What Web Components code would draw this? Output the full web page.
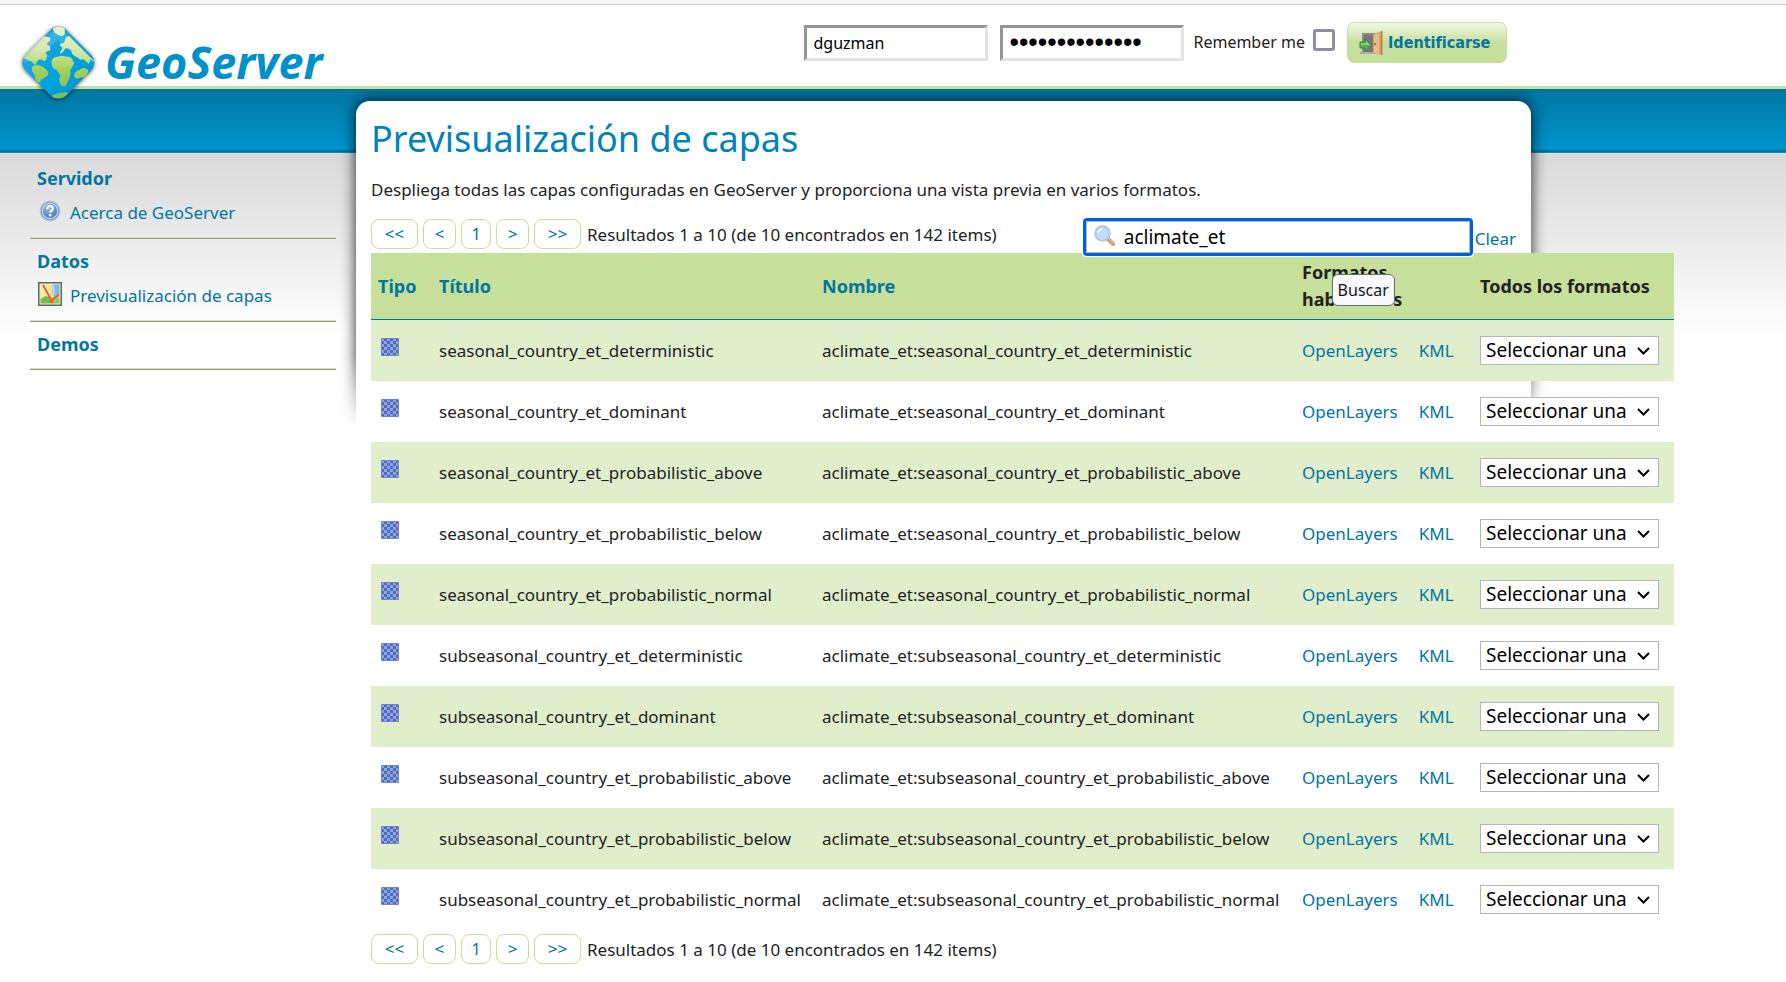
<!DOCTYPE html>
<html lang="es">
<head>
<meta charset="utf-8">
<title>GeoServer: Previsualización de capas</title>
<style>
  body {
    margin: 0;
    background: #fff;
    color: #222;
    font: 17px/27px "Noto Sans", Tahoma, sans-serif;
    --link: #0076a1;
    --brand: #0083ba;
    --green: #c6df9a;
    --green-light: #e1eecc;
  }
</style>
</head>
<body>
<gs-page>
  <gs-header slot="header"></gs-header>
  <gs-nav slot="nav">
    <gs-nav-group heading="Servidor">
      <gs-nav-link icon="help">Acerca de GeoServer</gs-nav-link>
    </gs-nav-group>
    <gs-nav-group heading="Datos">
      <gs-nav-link icon="map">Previsualización de capas</gs-nav-link>
    </gs-nav-group>
    <gs-nav-group heading="Demos"></gs-nav-group>
  </gs-nav>
  <gs-panel heading="Previsualización de capas">
    <span slot="description">Despliega todas las capas configuradas en GeoServer y proporciona una vista previa en varios formatos.</span>
    <gs-pager slot="tools">Resultados 1 a 10 (de 10 encontrados en 142 items)</gs-pager>
    <gs-search slot="tools"></gs-search>
    <gs-layer-table></gs-layer-table>
    <gs-pager>Resultados 1 a 10 (de 10 encontrados en 142 items)</gs-pager>
  </gs-panel>
</gs-page>

<script>
const define = (name, markup, setup) => customElements.define(name, class extends HTMLElement {
  constructor() {
    super();
    const template = document.createElement('template');
    template.innerHTML = markup;
    this.attachShadow({ mode: 'open' }).append(template.content.cloneNode(true));
  }
  connectedCallback() {
    if (setup) setup(this, this.shadowRoot);
  }
});

const icons = {
  help: `<svg viewBox="0 0 22 22" width="22" height="22">
    <defs><radialGradient id="b" cx=".4" cy=".3" r=".8"><stop offset="0" stop-color="#9dbbe2"/><stop offset="1" stop-color="#4371b5"/></radialGradient></defs>
    <circle cx="11" cy="11" r="10.5" fill="#b6cbe8"/><circle cx="11" cy="11" r="9.3" fill="#6f97cf"/>
    <circle cx="11" cy="11" r="8.2" fill="#d3e1f4"/><circle cx="11" cy="11" r="7.2" fill="url(#b)"/>
    <path d="M8.2 9q0-3 2.9-3 2.8 0 2.8 2.5 0 1.3-1.4 2.2-1.2.7-1.2 2" fill="none" stroke="#fff" stroke-width="2"/>
    <circle cx="11.2" cy="15.2" r="1.3" fill="#fff"/></svg>`,
  map: `<svg viewBox="0 0 24 24" width="24" height="24">
    <path fill="#5d6c5a" d="M0 0h24v24H0z"/><path fill="#e9efe6" d="M1.5 1.5h21v21h-21z"/>
    <path fill="#f3e486" d="M2.5 2.5h19v19h-19z"/><path fill="#f8eeb0" d="M2.5 2.5H8l3 8-8 5z"/>
    <path fill="#82b5ec" d="M14 2.5h7.500v10l-5.500 2-2-4z"/><path fill="#b8d7f4" d="M14 2.500h2l1 10-2 1z"/>
    <path fill="#76b956" d="M2.500 17l5-3 4 1 3 6.500h-12z"/><path fill="#8cc66d" d="M14 17l7.500-2v6.500H14z"/>
    <path d="M5 3l5 9 5 9M21 13l-5 3-4 4" fill="none" stroke="#ea4f36" stroke-width="1.700"/></svg>`,
  raster: `<svg viewBox="0 0 18 18" width="18" height="18">
    <defs><pattern id="c" width="6" height="6" patternUnits="userSpaceOnUse"><path fill="#5269bd" d="M0 0h6v6H0z"/><path fill="#8aa8e0" d="M0 0h3v3H0zM3 3h3v3H3z"/></pattern></defs>
    <rect width="18" height="18" rx="1" fill="#7583c8"/><path fill="url(#c)" d="M1 1h16v16H1z"/></svg>`
};

/* Page frame: header, blue band, side menu and content */
define('gs-page', `
<style>
  :host { display: block; }
  .body {
    display: flex;
    gap: 20px;
    padding: 0 255px 16px 30px;
    background:
      linear-gradient(#0076a1, #0092cc 58px, #0092cc 61px, #00759f 61px, #00759f 63px, #2ba0cb 64px, transparent 64px) 0 0 / 100% 65px no-repeat,
      linear-gradient(#d9d9d9, #fff) 0 64px / 100% 182px no-repeat;
  }
  nav { flex: 0 0 306px; padding-top: 67px; }
  main { flex: 1; min-width: 0; padding-top: 12px; }
</style>
<slot name="header"></slot>
<div class="body">
  <nav><slot name="nav"></slot></nav>
  <main><slot></slot></main>
</div>`);

define('gs-header', `
<style>
  :host {
    display: block;
    position: relative;
    z-index: 1;
    border-bottom: 3px solid var(--green);
  }
  .chrome { height: 4px; background: #f7f7fa; border-bottom: 1px solid #c9c9ce; }
  header { display: flex; justify-content: space-between; height: 81px; padding: 0 279px 0 15px; }
</style>
<div class="chrome"></div>
<header><gs-logo></gs-logo><gs-login></gs-login></header>`);

define('gs-logo', `
<style>
  :host { display: block; }
  a { display: flex; color: #0091cb; text-decoration: none; padding-top: 15px; }
  svg { flex: none; margin-bottom: -24px; }
  strong { font: italic 700 45px/60px "Noto Sans", sans-serif; margin-top: 12px; }
</style>
<a href="#" aria-label="GeoServer">
  <svg viewBox="0 0 270 270" width="90" height="90">
    <defs>
      <clipPath id="d"><rect x="44" y="42" width="172" height="172" rx="34" transform="rotate(45 130 128)"/></clipPath>
      <linearGradient id="sea" x1="0" y1="0" x2="1" y2="1"><stop offset="0" stop-color="#30a9dd"/><stop offset=".55" stop-color="#00a2df"/><stop offset="1" stop-color="#0086c8"/></linearGradient>
      <linearGradient id="land" gradientUnits="userSpaceOnUse" x1="130" y1="20" x2="130" y2="235"><stop offset="0" stop-color="#e5efd0"/><stop offset=".3" stop-color="#d3e5a8"/><stop offset=".5" stop-color="#b4d873"/><stop offset=".62" stop-color="#9fcf5c"/><stop offset="1" stop-color="#7fbd57"/></linearGradient>
      <filter id="s" x="-20%" y="-20%" width="140%" height="140%"><feGaussianBlur stdDeviation="6"/></filter>
    </defs>
    <rect x="44" y="44" width="172" height="172" rx="34" transform="rotate(45 130 130)" fill="#000" opacity=".65" filter="url(#s)"/>
    <g clip-path="url(#d)">
      <path fill="url(#sea)" d="M0 0h270v270H0z"/>
      <g fill="url(#land)">
        <path d="M20 112L84 48Q96 50 106 54Q108 62 98 68Q92 74 104 78Q108 86 104 92Q94 92 92 100Q98 104 96 112Q94 120 88 124Q80 116 72 118Q64 128 60 136Q48 120 34 118Z"/>
        <path d="M50 142Q62 130 76 138Q86 140 100 156Q100 168 90 172Q78 178 72 190Q56 178 60 166Q50 156 50 142Z"/>
        <path d="M114 24Q130 16 148 24Q152 34 148 44Q138 52 128 44Q114 38 114 24Z"/>
        <path d="M110 122Q114 110 128 110Q142 104 152 110Q164 108 172 116Q172 124 178 130Q172 142 166 150Q168 160 164 172Q158 188 152 198Q140 202 136 192Q130 178 136 168Q132 158 124 150Q108 146 110 122Z"/>
        <path d="M150 62Q152 48 162 48L238 124Q230 122 226 118Q224 130 220 132Q210 120 204 116Q198 122 194 118Q186 110 178 108Q168 100 170 92Q160 82 150 86Q146 96 136 102Q134 92 142 88Q138 76 150 62Z"/>
        <path d="M134 76q2-8 8-6t4 8q-6 6-12-2z"/>
        <path d="M177 168Q178 154 192 150Q206 138 220 150Q218 166 210 176Q198 168 190 176Q182 178 177 168Z"/>
        <path d="M104 230Q130 214 162 218Q154 232 132 238Z"/>
      </g>
      <path d="M130 21L240 126Q220 130 188 112Q150 84 130 60Q100 76 76 116Q50 130 22 124Z" fill="#fff" opacity=".15"/>
    </g>
  </svg>
  <strong>GeoServer</strong>
</a>`);

define('gs-login', `
<style>
  :host { display: block; }
  form { display: flex; align-items: center; gap: 12px; padding-top: 17px; }
  .field {
    box-sizing: border-box;
    width: 184px;
    height: 36px;
    padding: 0 6px;
    border: 3px solid;
    border-color: #949494 #e3e3e3 #e3e3e3 #949494;
    background: #fff;
    color: #000;
    font: 16px/27px "Noto Sans", sans-serif;
  }
  .field[type=password] { font-family: "Liberation Sans", sans-serif; font-size: 27px; }
  label { display: flex; align-items: center; gap: 8px; margin-left: -3px; font-size: 16px; }
  input[type=checkbox] {
    appearance: none;
    box-sizing: border-box;
    width: 22px;
    height: 22px;
    margin: 0 0 6px;
    border: 3px solid #8f8f9d;
    border-radius: 3px;
    background: #fff;
  }
  button {
    display: flex;
    align-items: center;
    gap: 5px;
    width: 160px;
    height: 41px;
    padding: 0 11px;
    border: 1px solid var(--green);
    border-radius: 7px;
    background: linear-gradient(#f3f8e9, var(--green) 50%);
    color: var(--link);
    font: 700 16px/27px "DejaVu Sans Condensed", "Noto Sans", sans-serif;
  }
  svg { flex: none; }
</style>
<form>
  <input class="field" type="text" value="dguzman" aria-label="Usuario">
  <input class="field" type="password" value="clavegeoserver" aria-label="Contraseña">
  <label>Remember me <input type="checkbox"></label>
  <button type="button">
    <svg viewBox="0 0 24 24" width="24" height="24">
      <path fill="#8c8c8c" d="M3 2h13v20H3z"/><path fill="#777" d="M5 4h10v17H5z"/><path fill="#aaa" d="M1 21h15v2H1z"/>
      <path fill="#d9a068" d="M14 3l9-3v24l-9-2z"/><path fill="#e9bb8a" d="M15 4l5-2v21l-5-1z"/><path fill="#c07f42" d="M22 0.500l1.500-.5v24l-1.500-.5z"/>
      <circle cx="16" cy="13" r="1" fill="#8a5927"/>
      <path fill="#5fae55" stroke="#3c8640" d="M1 11h5V7.500l6.500 6.500L6 20.500V17H1z"/><path fill="#8fce82" d="M2 12h5v-2l4 4H2z"/>
    </svg>Identificarse
  </button>
</form>`);

define('gs-nav', `<style>:host { display: block; }</style><slot></slot>`);

define('gs-nav-group', `
<style>
  :host {
    display: flex;
    flex-direction: column;
    gap: 7px;
    padding: 9px 7px 11px;
    border-bottom: 1px solid #98a187;
    box-shadow: inset 0 -1px #d3dfbd;
  }
  h2 { margin: 0; font-size: 18px; line-height: 27px; color: var(--link); }
</style>
<h2></h2><slot></slot>`, (host, root) => {
  root.querySelector('h2').textContent = host.getAttribute('heading');
});

define('gs-nav-link', `
<style>
  :host { display: block; height: 28px; }
  a { display: flex; align-items: center; gap: 8px; color: var(--link); text-decoration: none; }
  i { flex: 0 0 25px; display: grid; justify-content: center; }
  svg { margin-bottom: 3px; }
</style>
<a href="#"><i></i><slot></slot></a>`, (host, root) => {
  root.querySelector('i').innerHTML = icons[host.getAttribute('icon')];
});

/* White sheet whose shadow fades out down the page */
define('gs-panel', `
<style>
  :host { display: block; position: relative; padding: 14px 15px 0; }
  .shade {
    position: absolute;
    inset: -20px -20px auto;
    height: 350px;
    padding: 20px 20px 0;
    box-sizing: border-box;
    overflow: hidden;
    -webkit-mask-image: linear-gradient(#000 78%, transparent 99%);
    mask-image: linear-gradient(#000 78%, transparent 99%);
  }
  .shade div {
    height: 400px;
    border-radius: 14px;
    background: #fff;
    box-shadow: 0 0 15px rgba(0, 0, 0, .85);
  }
  .content { position: relative; }
  h1 { margin: 0; font-size: 36px; line-height: 48px; font-weight: 400; color: var(--brand); }
  p { margin: 13px 0 16px; }
  .tools { display: flex; justify-content: space-between; height: 34px; }
</style>
<div class="shade"><div></div></div>
<div class="content">
  <h1></h1>
  <p><slot name="description"></slot></p>
  <div class="tools"><slot name="tools"></slot></div>
  <slot></slot>
</div>`, (host, root) => {
  root.querySelector('h1').textContent = host.getAttribute('heading');
});

define('gs-pager', `
<style>
  :host { display: flex; align-items: center; gap: 5px; height: 30px; white-space: nowrap; }
  a {
    box-sizing: border-box;
    width: 33px;
    height: 30px;
    border: 1px solid var(--green);
    border-radius: 8px;
    color: var(--link);
    text-align: center;
    text-decoration: none;
    line-height: 28px;
  }
  .end { width: 47px; }
  .page { width: 30px; }
  slot { display: block; margin-left: 1px; }
</style>
<a class="end" href="#">&lt;&lt;</a><a href="#">&lt;</a><a class="page" href="#">1</a><a href="#">&gt;</a><a class="end" href="#">&gt;&gt;</a>
<slot></slot>`);

define('gs-search', `
<style>
  :host { display: flex; align-items: flex-end; gap: 5px; position: relative; z-index: 1; }
  .box {
    display: flex;
    align-items: center;
    gap: 9px;
    box-sizing: border-box;
    width: 384px;
    height: 32px;
    padding: 0 7px;
    border: 1px solid #b5b5bb;
    outline: 3px solid #0060df;
    border-radius: 1px;
    background: #fff;
    box-shadow: 0 0 0 4px #fff;
  }
  svg { flex: none; margin-bottom: 3px; }
  input { flex: 1; min-width: 0; border: 0; padding: 0; outline: 0; background: none; color: #000; font: 19px/27px "Noto Sans", sans-serif; }
  a { padding-bottom: 1px; color: var(--link); text-decoration: none; }
  .tip {
    position: absolute;
    left: 246px;
    top: 55px;
    box-sizing: border-box;
    width: 63px;
    height: 32px;
    border: 1px solid #6a6a75;
    border-radius: 6px;
    background: #f9f9fb;
    color: #15141a;
    text-align: center;
    font-size: 16px;
    line-height: 30px;
  }
</style>
<div class="box">
  <svg viewBox="0 0 21 21" width="21" height="21">
    <path d="M13 13l6 6" stroke="#d5a063" stroke-width="4" stroke-linecap="round"/>
    <path d="M14 13l5 5" stroke="#ecc793" stroke-width="1"/>
    <circle cx="8.5" cy="8.5" r="7.3" fill="#bfdcf8" stroke="#b2c5e3" stroke-width="2"/>
    <path d="M4 8q1-4 5-4" stroke="#eaf4fe" stroke-width="2" fill="none"/>
  </svg>
  <input type="text" value="aclimate_et" aria-label="Buscar">
</div>
<a href="#">Clear</a>
<div class="tip" role="tooltip">Buscar</div>`);

define('gs-layer-table', `
<style>
  :host { display: block; margin-bottom: 4px; }
  table { table-layout: fixed; width: 1303px; border-collapse: separate; border-spacing: 0; white-space: nowrap; }
  .type { width: 61px; }
  .title { width: 383px; }
  .name { width: 480px; }
  .common { width: 178px; }
  .all { width: 201px; }
  th, td { box-sizing: border-box; padding: 0 7px; text-align: left; vertical-align: middle; }
  th { height: 67px; background: var(--green); border-bottom: 1px solid var(--link); font-size: 18px; white-space: normal; }
  td { height: 61px; }
  tbody tr:nth-child(odd) { background: var(--green-light); }
  a { color: var(--link); text-decoration: none; }
  .icon { padding: 0 10px 8px; }
  .icon svg { display: block; }
  .links { display: flex; gap: 21px; }
  select {
    appearance: none;
    display: block;
    box-sizing: border-box;
    width: 179px;
    height: 29px;
    padding: 0 5px;
    border: 1px solid #b5b5b9;
    border-radius: 0;
    background: #fff url("data:image/svg+xml,%3Csvg xmlns='http://www.w3.org/2000/svg' width='13' height='8'%3E%3Cpath d='M1 1l5.5 5.5L12 1' fill='none' stroke='%23000' stroke-width='2'/%3E%3C/svg%3E") right 8px center no-repeat;
    color: #000;
    font: 19px/27px "Noto Sans", sans-serif;
  }
</style>
<table>
  <colgroup><col class="type"><col class="title"><col class="name"><col class="common"><col class="all"></colgroup>
  <thead><tr>
    <th><a href="#">Tipo</a></th><th><a href="#">Título</a></th><th><a href="#">Nombre</a></th>
    <th>Formatos habilitados</th><th>Todos los formatos</th>
  </tr></thead>
  <tbody></tbody>
</table>`, (host, root) => {
  const kinds = ['deterministic', 'dominant', 'probabilistic_above', 'probabilistic_below', 'probabilistic_normal'];
  root.querySelector('tbody').innerHTML = ['seasonal', 'subseasonal'].flatMap(season => kinds.map(kind => {
    const layer = season + '_country_et_' + kind;
    return `<tr>
      <td class="icon">${icons.raster}</td><td>${layer}</td><td>aclimate_et:${layer}</td>
      <td><div class="links"><a href="#">OpenLayers</a><a href="#">KML</a></div></td>
      <td><select aria-label="Formato para ${layer}"><option>Seleccionar una</option></select></td>
    </tr>`;
  })).join('');
});
</script>
</body>
</html>
